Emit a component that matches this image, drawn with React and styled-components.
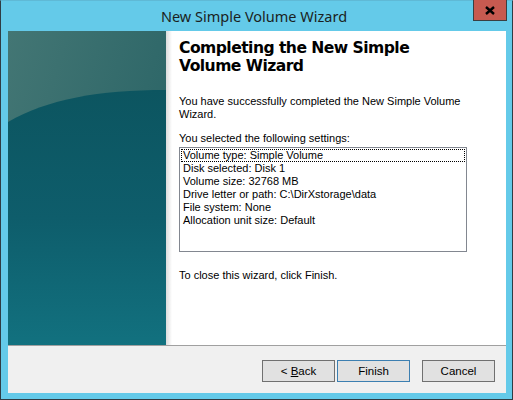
import React from "react";
import styled, { createGlobalStyle } from "styled-components";

const Global = createGlobalStyle`
  html, body { margin: 0; padding: 0; background: #ffffff; }
  body { font-family: "Liberation Sans", Arial, sans-serif; }
`;

const Window = styled.div`
  width: 513px;
  height: 400px;
  box-sizing: border-box;
  border: 1px solid #2f3c44;
  border-top-color: #5fb9d6;
  background: #64cae9;
  display: flex;
  flex-direction: column;
`;

const TitleBar = styled.div`
  height: 30px;
  display: grid;
  grid-template-columns: 1fr auto 1fr;
  align-items: start;
  padding-right: 5px;
`;

const Title = styled.div`
  grid-column: 2;
  font-family: "Noto Sans", "Open Sans", sans-serif;
  font-size: 14.5px;
  line-height: 20px;
  color: #1b1f22;
  padding-top: 5px;
  white-space: nowrap;
`;

const CloseButton = styled.div`
  grid-column: 3;
  justify-self: end;
  width: 34px;
  height: 21px;
  margin-top: -1px;
  box-sizing: border-box;
  background: #c75a50;
  border: 1px solid #3a3f42;
  border-top: none;
  display: flex;
  align-items: center;
  justify-content: center;
`;

const Client = styled.div`
  flex: 1;
  margin: 0 6px 6px 7px;
  display: flex;
  flex-direction: column;
  background: #f0f0f0;
`;

const Main = styled.div`
  height: 314px;
  display: flex;
  background: #ffffff;
  border-bottom: 1px solid #a0a0a0;
`;

const Banner = styled.div`
  width: 158px;
  flex: none;
  display: flex;
`;

const BannerArt = styled.svg`
  display: block;
  width: 158px;
  height: 314px;
`;

const Shade = styled.div`
  width: 6px;
  flex: none;
  background: linear-gradient(to right, #dcdcdc, #f4f4f4 70%, #ffffff);
`;

const Content = styled.div`
  flex: 1;
  padding: 8px 0 0 7px;
  display: flex;
  flex-direction: column;
`;

const Heading = styled.h1`
  margin: 0;
  font-family: "DejaVu Sans", Verdana, sans-serif;
  font-weight: bold;
  font-size: 15.6px;
  letter-spacing: -0.55px;
  line-height: 18px;
  color: #000000;
  width: 260px;
`;

const Text = styled.p`
  margin: ${(p) => p.$top || 0}px 0 0 0;
  font-size: 11px;
  line-height: 13px;
  color: #000000;
  width: 290px;
`;

const SettingsList = styled.div`
  margin-top: 2px;
  width: 288px;
  height: 105px;
  box-sizing: border-box;
  border: 1px solid #828790;
  background: #ffffff;
  padding: 1px;
  display: flex;
  flex-direction: column;
`;

const Item = styled.div`
  font-size: 11px;
  line-height: 13px;
  height: 13px;
  color: #000000;
  padding-left: 2px;
  box-sizing: border-box;
  outline: ${(p) => (p.$focused ? "1px dotted #000" : "none")};
  outline-offset: -1px;
  white-space: nowrap;
`;

const Footer = styled.div`
  flex: 1;
  display: flex;
  justify-content: flex-end;
  align-items: flex-start;
  padding: 14px 11px 0 0;
`;

const Button = styled.div`
  width: 73px;
  height: 22px;
  box-sizing: border-box;
  border: 1px solid ${(p) => (p.$default ? "#3c7fb1" : "#707070")};
  background: #e1e1e1;
  font-size: 11.5px;
  color: #000000;
  display: flex;
  align-items: center;
  justify-content: center;
  margin-left: ${(p) => p.$gap || 0}px;
`;

const Key = styled.span`
  text-decoration: underline;
`;

const settings = [
  "Volume type: Simple Volume",
  "Disk selected: Disk 1",
  "Volume size: 32768 MB",
  "Drive letter or path: C:\\DirXstorage\\data",
  "File system: None",
  "Allocation unit size: Default",
];

function WizardBanner() {
  return (
    <BannerArt viewBox="0 0 158 314" preserveAspectRatio="none">
      <defs>
        <linearGradient id="sky" x1="0" y1="0" x2="1" y2="0.6">
          <stop offset="0" stopColor="#437674" />
          <stop offset="1" stopColor="#2a6466" />
        </linearGradient>
        <linearGradient id="sea" x1="0" y1="0" x2="0" y2="1">
          <stop offset="0" stopColor="#0c5560" />
          <stop offset="0.5" stopColor="#0e5d6b" />
          <stop offset="1" stopColor="#12717f" />
        </linearGradient>
      </defs>
      <rect x="0" y="0" width="158" height="314" fill="url(#sky)" />
      <path d="M0 91 C 40 68, 90 59, 158 59 L158 314 L0 314 Z" fill="url(#sea)" />
    </BannerArt>
  );
}

export default function App() {
  return (
    <>
      <Global />
      <Window>
        <TitleBar>
          <Title>New Simple Volume Wizard</Title>
          <CloseButton>
            <svg width="10" height="9" viewBox="0 0 10 9">
              <path d="M1 1 L9 8 M9 1 L1 8" stroke="#000" strokeWidth="2.4" />
            </svg>
          </CloseButton>
        </TitleBar>
        <Client>
          <Main>
            <Banner>
              <WizardBanner />
            </Banner>
            <Shade />
            <Content>
              <Heading>Completing the New Simple Volume Wizard</Heading>
              <Text $top={20}>
                You have successfully completed the New Simple Volume Wizard.
              </Text>
              <Text $top={11}>You selected the following settings:</Text>
              <SettingsList>
                {settings.map((s, i) => (
                  <Item key={s} $focused={i === 0}>
                    {s}
                  </Item>
                ))}
              </SettingsList>
              <Text $top={17}>To close this wizard, click Finish.</Text>
            </Content>
          </Main>
          <Footer>
            <Button>
              &lt;&nbsp;<Key>B</Key>ack
            </Button>
            <Button $default $gap={2}>Finish</Button>
            <Button $gap={12}>Cancel</Button>
          </Footer>
        </Client>
      </Window>
    </>
  );
}
